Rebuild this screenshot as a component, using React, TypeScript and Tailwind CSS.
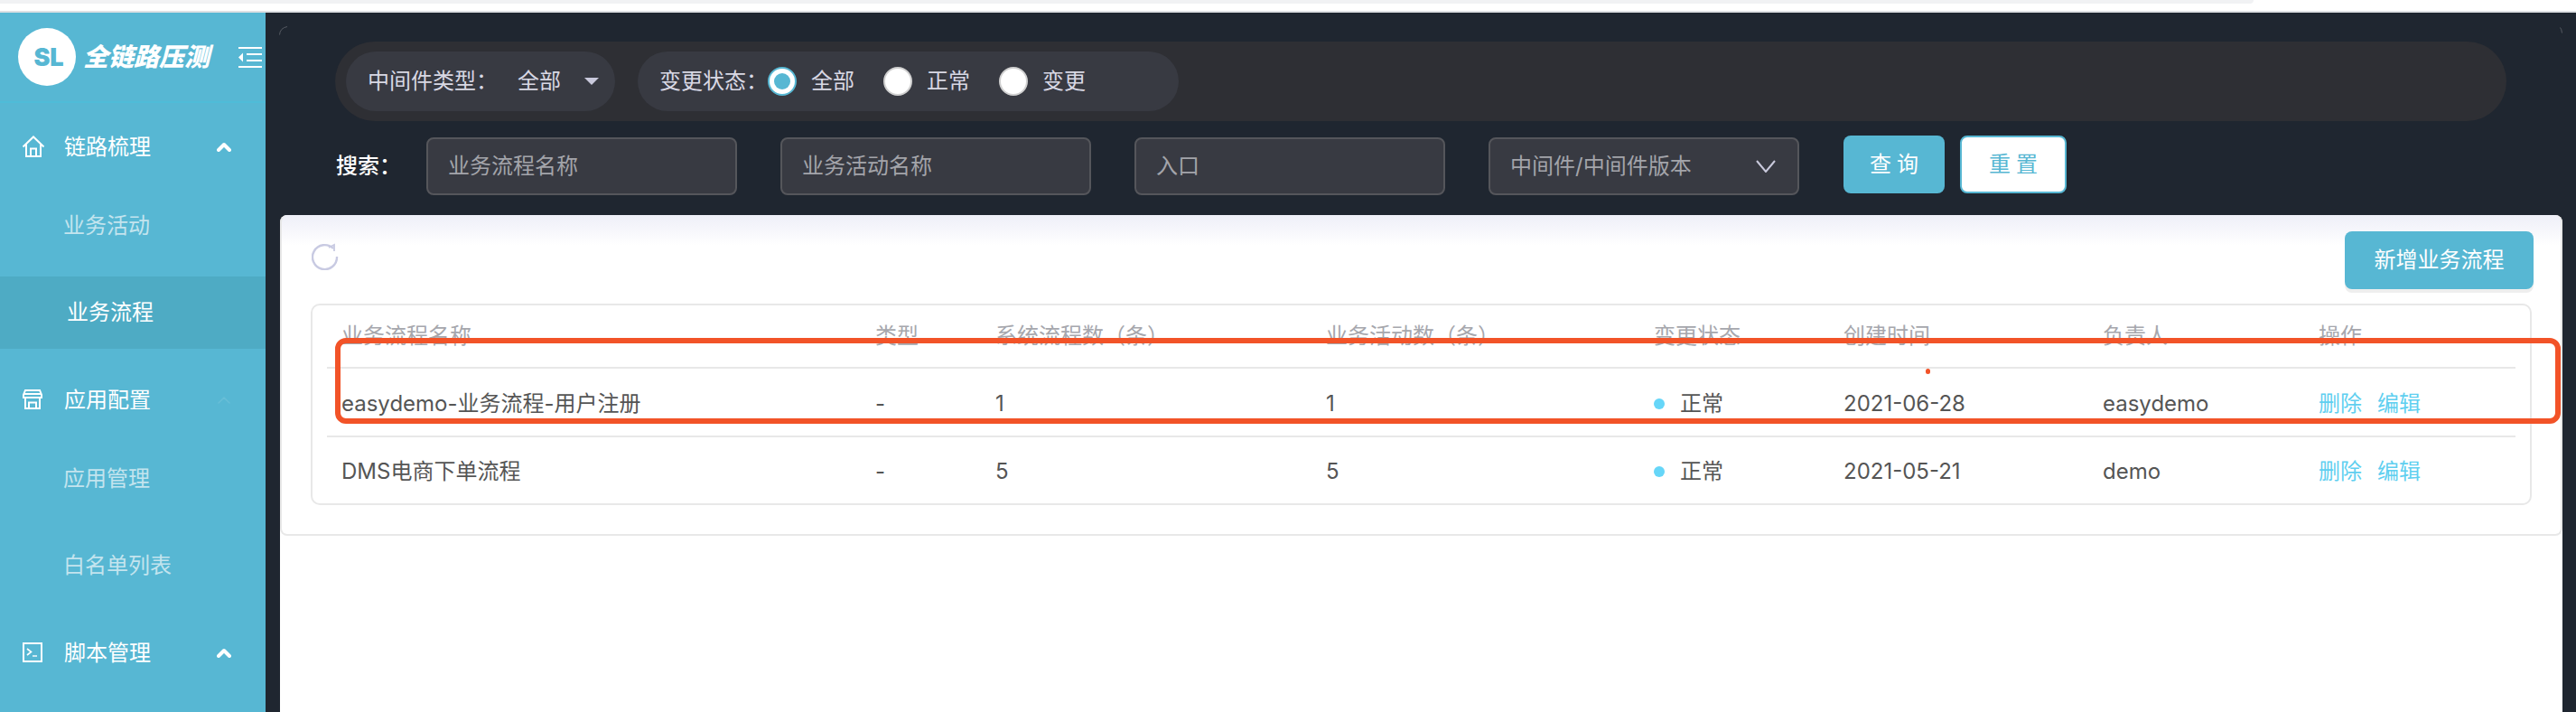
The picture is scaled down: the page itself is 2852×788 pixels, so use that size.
const CJK = "font-['Inter','Noto_Sans_CJK_SC',sans-serif]";

interface Fila {
  nome: string;
  tipo: string;
  sistemas: string;
  atividades: string;
  data: string;
  dono: string;
}

const FILAS: Fila[] = [
  { nome: "easydemo-业务流程-用户注册", tipo: "-", sistemas: "1", atividades: "1", data: "2021-06-28", dono: "easydemo" },
  { nome: "DMS电商下单流程", tipo: "-", sistemas: "5", atividades: "5", data: "2021-05-21", dono: "demo" },
];

const COLUNAS = ["业务流程名称", "类型", "系统流程数（条）", "业务活动数（条）", "变更状态", "创建时间", "负责人", "操作"];

const GRID = "grid grid-cols-[591px_133px_366px_363px_210px_287px_239px_1fr]";

function Chevron({ faint }: { faint?: boolean }) {
  return (
    <svg width="16" height="11" viewBox="0 0 16 11" fill="none" className={faint ? "opacity-10" : ""}>
      <path d="M2 9 L8 3 L14 9" stroke="white" strokeWidth={faint ? 1.5 : 4} strokeLinecap="round" strokeLinejoin="round" />
    </svg>
  );
}

function HomeIcon() {
  return (
    <svg width="26" height="24" viewBox="0 0 26 24" fill="none" stroke="white" strokeWidth="2">
      <path d="M1.5 12.5 L13 1.5 L24.5 12.5 M5 10 V23 H21 V10" />
      <path d="M10 23 V14.5 H16 V23" />
    </svg>
  );
}

function StoreIcon() {
  return (
    <svg width="22" height="22" viewBox="0 0 22 22" fill="none" stroke="white" strokeWidth="2" className="ml-px">
      <path d="M3 1 H19 L21 6 V9 H1 V6 Z" />
      <path d="M1.5 5 H20.5 M3 9 V21 H19 V9" />
      <path d="M7 21 V14.5 H15 V21" />
    </svg>
  );
}

function TerminalIcon() {
  return (
    <svg width="22" height="22" viewBox="0 0 22 22" fill="none" stroke="white" className="ml-px">
      <rect x="1" y="1" width="20" height="20" strokeWidth="2" />
      <path d="M5 7 L9.5 10.5 L5 14" strokeWidth="1.6" />
      <path d="M11 15 H16" strokeWidth="1.4" />
    </svg>
  );
}

function CollapseIcon() {
  return (
    <svg width="26" height="23" viewBox="0 0 26 23" fill="white">
      <rect x="0" y="0" width="26" height="2" />
      <rect x="9" y="7" width="17" height="2" />
      <rect x="9" y="14" width="17" height="2" />
      <rect x="0" y="21" width="26" height="2" />
      <path d="M5 6.5 V16.5 L0 11.5 Z" />
    </svg>
  );
}

function MenuGrupo({ icon, label, faint }: { icon: React.ReactNode; label: string; faint?: boolean }) {
  return (
    <div className="h-[96px] flex items-center text-white">
      <span className="w-[71px] pl-6 flex">{icon}</span>
      <span className="w-[169px] pt-0.5">{label}</span>
      <Chevron faint={faint} />
    </div>
  );
}

function MenuItem({ label, active }: { label: string; active?: boolean }) {
  return (
    <div
      className={`h-[80px] flex items-center ${
        active ? "bg-[#4eabc4] text-white pl-[74px]" : "text-[#c3e4ee] pl-[70px]"
      }`}
    >
      {label}
    </div>
  );
}

function Radio({ on, label }: { on?: boolean; label: string }) {
  return (
    <span className="flex items-center gap-4">
      {on ? (
        <span className="w-8 h-8 rounded-full border-2 border-[#57b7d3] bg-white flex items-center justify-center">
          <span className="w-[18px] h-[18px] rounded-full bg-[#57b7d3]" />
        </span>
      ) : (
        <span className="w-8 h-8 rounded-full border-2 border-[#d0d0d0] bg-white" />
      )}
      <span className="text-[#d8d8e4]">{label}</span>
    </span>
  );
}

function Campo({ label }: { label: string }) {
  return (
    <div className="h-16 w-[344px] rounded-lg border-2 border-[#55565b] bg-[#383a42] pl-[22px] flex items-center text-[#a3a4aa]">
      {label}
    </div>
  );
}

export default function App() {
  return (
    <div className={`w-[2852px] h-[788px] overflow-hidden flex flex-col text-[24px] leading-none bg-white ${CJK}`}>
      <div className="h-[14px] shrink-0 border-b-2 border-[#dee0e3]">
        <div className="h-1 w-[2495px] bg-[#f1f2f4] rounded-br-lg" />
      </div>

      <div className="flex-1 flex min-h-0">
        <aside className="w-[294px] shrink-0 bg-[#57b7d3]">
          <div className="h-[100px] border-b-2 border-[#4fbcd8] flex items-center pl-5">
            <div className="w-16 h-16 rounded-full bg-white flex items-center justify-center pl-1 text-[#57b7d3] text-[27px] font-black">
              SL
            </div>
            <span className="ml-2 w-[172px] text-white text-[28px] font-black italic">全链路压测</span>
            <CollapseIcon />
          </div>
          <MenuGrupo icon={<HomeIcon />} label="链路梳理" />
          <div className="flex flex-col gap-4 mb-2">
            <MenuItem label="业务活动" />
            <MenuItem label="业务流程" active />
          </div>
          <MenuGrupo icon={<StoreIcon />} label="应用配置" faint />
          <div className="flex flex-col gap-4 mb-2">
            <MenuItem label="应用管理" />
            <MenuItem label="白名单列表" />
          </div>
          <MenuGrupo icon={<TerminalIcon />} label="脚本管理" />
        </aside>

        <main className="relative flex-1 min-w-0 bg-[#1f2630] flex flex-col">
          {/* restos do canto arredondado do painel escuro */}
          <svg width="10" height="10" viewBox="0 0 10 10" fill="none" stroke="#565a62" className="absolute left-[15px] top-[15px]">
            <path d="M0.5 9.5 Q1 2 9 0.5" />
          </svg>
          <svg width="3" height="7" viewBox="0 0 3 7" fill="none" stroke="#565a62" className="absolute left-[2540px] top-4">
            <path d="M0.5 0.5 Q2 2 2.5 6.5" />
          </svg>

          <div className="ml-[77px] mt-8 w-[2404px] h-[88px] rounded-[44px] bg-[#2e2f34] flex items-center pl-3 gap-[25px]">
            <div className="w-[298px] h-[66px] rounded-[33px] bg-[#383a42] flex items-center pl-6 text-[#d8d8e4]">
              <span className="w-[166px]">中间件类型：</span>
              <span>全部</span>
              <span className="ml-[26px] w-0 h-0 border-x-[8px] border-x-transparent border-t-[8px] border-t-[#c9c9dc]" />
            </div>
            <div className="w-[599px] h-[66px] rounded-[33px] bg-[#383a42] flex items-center pl-6 text-[#d8d8e4]">
              <span className="w-[120px]">变更状态：</span>
              <span className="flex items-center gap-8">
                <Radio on label="全部" />
                <Radio label="正常" />
                <Radio label="变更" />
              </span>
            </div>
          </div>

          <div className="ml-[78px] mt-[18px] flex items-start">
            <span className="w-[100px] h-16 flex items-center text-white font-medium">搜索：</span>
            <div className="flex gap-12">
              <Campo label="业务流程名称" />
              <Campo label="业务活动名称" />
              <Campo label="入口" />
              <div className="h-16 w-[344px] rounded-lg border-2 border-[#55565b] bg-[#383a42] pl-[22px] pr-6 flex items-center justify-between text-[#a3a4aa]">
                <span>中间件/中间件版本</span>
                <svg width="22" height="14" viewBox="0 0 22 14" fill="none" stroke="#c9c9dc" strokeWidth="2">
                  <path d="M1 1 L11 13 L21 1" />
                </svg>
              </div>
            </div>
            <button className="ml-[49px] -mt-0.5 w-[112px] h-16 rounded-lg bg-[#57b7d3] text-white tracking-[6px] pl-[6px]">查询</button>
            <button className="ml-[17px] -mt-0.5 w-[118px] h-16 rounded-lg bg-white border-2 border-[#57b7d3] text-[#57b7d3] tracking-[6px] pl-[6px]">重置</button>
          </div>

          <div className="ml-4 mt-[22px] w-[2527px] flex-1 bg-white rounded-t-lg">
            <div className="h-[355px] rounded-lg border-x-2 border-b-2 border-[#e8e8e8] bg-gradient-to-b from-[#eeeff8] to-white to-[34px] relative">
              <div className="flex justify-between pt-[18px] pl-[33px] pr-[30px]">
                <svg width="30" height="30" viewBox="0 0 30 30" fill="none" stroke="#c8cae2" strokeWidth="2.4" className="mt-[13px]">
                  <path d="M24 6 A13.5 13.5 0 1 0 28 15" />
                  <path d="M19 5 L25 2 L25 9" strokeWidth="1.8" />
                </svg>
                <button className="w-[209px] h-16 rounded-lg bg-[#57b7d3] text-white shadow-[0_4px_0_#eeeeee]">新增业务流程</button>
              </div>

              <div className="mt-4 mx-[32px] h-[223px] rounded-[10px] border-2 border-[#e8e8e8] text-[#555555] px-4 pt-[18px]">
                <div className={`${GRID} h-[52px] border-b-2 border-[#e8e8e8] pl-4 text-[#a6a7ad] pt-1`}>
                  {COLUNAS.map((c) => (
                    <span key={c}>{c}</span>
                  ))}
                </div>
                {FILAS.map((f, i) => (
                  <div key={f.nome} className={`${GRID} h-[76px] items-center pl-4 ${i === 0 ? "border-b-2 border-[#e8e8e8] pt-1" : ""}`}>
                    <span>{f.nome}</span>
                    <span>{f.tipo}</span>
                    <span>{f.sistemas}</span>
                    <span>{f.atividades}</span>
                    <span className="flex items-center gap-[17px]">
                      <span className="w-3 h-3 rounded-full bg-[#66d6f8]" />
                      正常
                    </span>
                    <span>{f.data}</span>
                    <span>{f.dono}</span>
                    <span className="flex gap-[17px] text-[#5fcff0]">
                      <span>删除</span>
                      <span>编辑</span>
                    </span>
                  </div>
                ))}
              </div>

              {/* marca vermelha da anotação por cima da tabela */}
              <div className="absolute left-[59px] top-[136px] w-[2464px] h-[95px] rounded-xl border-[6px] border-[#f25328]" />
              <div className="absolute left-[1820px] top-[170px] w-[5px] h-1.5 rounded-full bg-[#f25328]" />
            </div>
          </div>
        </main>
      </div>
    </div>
  );
}
